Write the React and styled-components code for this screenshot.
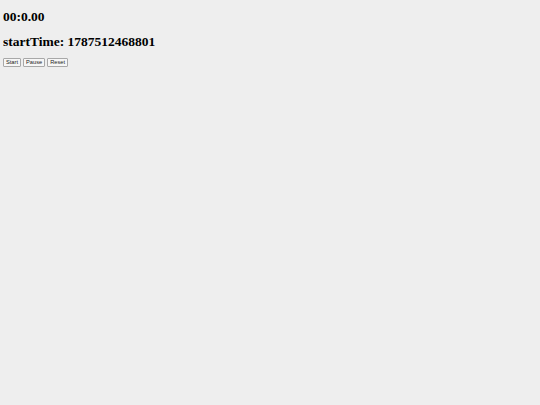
import React from "react";
import styled, { createGlobalStyle } from "styled-components";

const Global = createGlobalStyle`
  html, body { background: #eeeeee; }
  body { margin: 3px; font-family: "Liberation Serif", "Times New Roman", serif; color: #000; }
`;

const Page = styled.div`
  display: flex;
  flex-direction: column;
  align-items: flex-start;
`;

const Heading = styled.h1`
  font-family: "Liberation Serif", "Times New Roman", serif;
  font-size: 13.5px;
  font-weight: bold;
  line-height: 15px;
  margin: 6px 0 ${(p) => (p.$mb != null ? p.$mb : 6)}px;
`;

const Toolbar = styled.div`
  display: flex;
  gap: 2px;
  margin-top: 3px;
`;

const Button = styled.button`
  font-family: "Liberation Sans", Arial, sans-serif;
  font-size: 5.7px;
  line-height: 7px;
  color: #222;
  background: #f6f6f6;
  border: 1px solid #a8a8a8;
  border-radius: 1px;
  padding: 0 2px;
  height: 9px;
`;

export default function App() {
  return (
    <Page>
      <Global />
      <Heading $mb={4}>00:0.00</Heading>
      <Heading>startTime: 1787512468801</Heading>
      <Toolbar>
        <Button>Start</Button>
        <Button>Pause</Button>
        <Button>Reset</Button>
      </Toolbar>
    </Page>
  );
}
